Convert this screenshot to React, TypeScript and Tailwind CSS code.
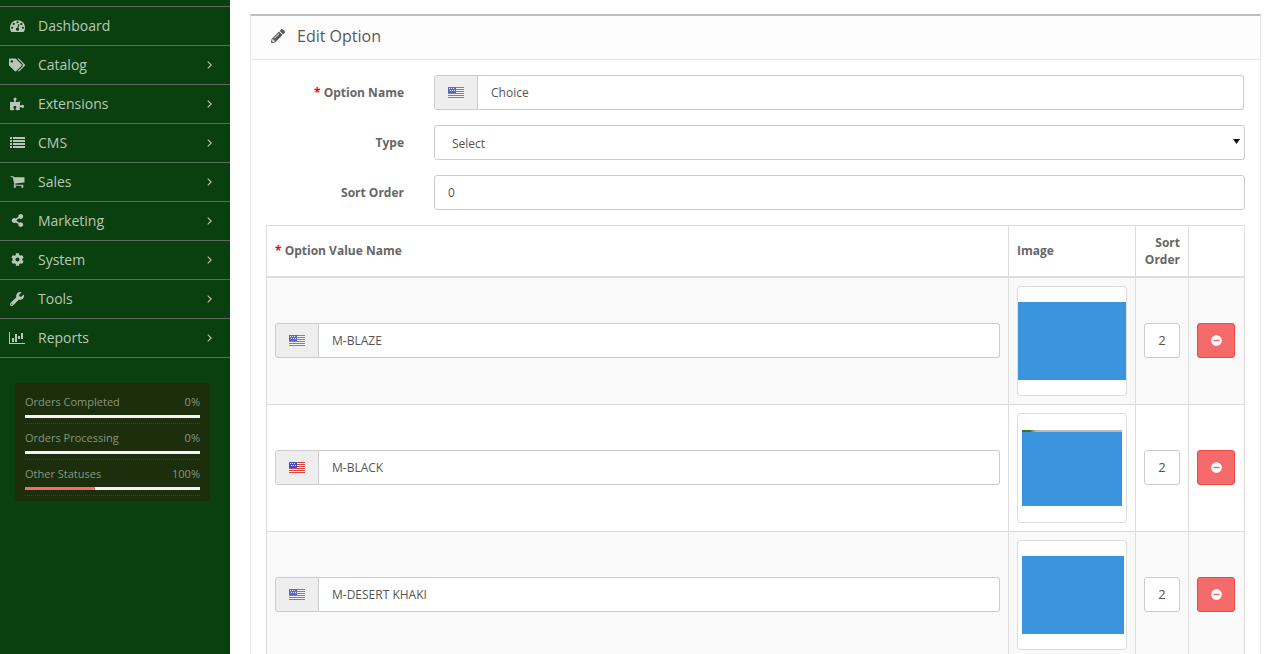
import React from "react";
import { FaTags, FaShareAlt, FaCog, FaWrench, FaPencilAlt, FaMinusCircle, FaPuzzlePiece } from "react-icons/fa";

type IconProps = { size?: number };

const Dash = ({ size = 15 }: IconProps) => (
  <svg width={size} height={size} viewBox="0 0 1792 1792" fill="currentColor">
    <path d="M384 1152q0-53-37.5-90.5t-90.5-37.5-90.5 37.5-37.5 90.5 37.5 90.5 90.5 37.5 90.5-37.5 37.5-90.5zm192-448q0-53-37.5-90.5t-90.5-37.5-90.5 37.5-37.5 90.5 37.5 90.5 90.5 37.5 90.5-37.5 37.5-90.5zm428 481l101-382q6-26-7.5-48.5t-38.5-29.5-48 6.5-30 39.5l-101 382q-60 5-107 43.5t-63 98.5q-20 77 20 146t117 89 146-20 89-117q16-60-6-117t-72-91zm660-33q0-53-37.5-90.5t-90.5-37.5-90.5 37.5-37.5 90.5 37.5 90.5 90.5 37.5 90.5-37.5 37.5-90.5zm-640-640q0-53-37.5-90.5t-90.5-37.5-90.5 37.5-37.5 90.5 37.5 90.5 90.5 37.5 90.5-37.5 37.5-90.5zm448 192q0-53-37.5-90.5t-90.5-37.5-90.5 37.5-37.5 90.5 37.5 90.5 90.5 37.5 90.5-37.5 37.5-90.5zm320 448q0 261-141 483-19 29-54 29h-1402q-35 0-54-29-141-221-141-483 0-182 71-348t191-286 286-191 348-71 348 71 286 191 191 286 71 348z" />
  </svg>
);
const Puzzle = () => <FaPuzzlePiece size={14} />;
const ListIcon = () => (
  <svg width="15" height="11" viewBox="0 0 15 11" fill="currentColor" shapeRendering="crispEdges">
    {[0, 3, 6, 9].map((y) => (
      <g key={y}>
        <rect x="0" y={y} width="2" height="2" />
        <rect x="3" y={y} width="12" height="2" />
      </g>
    ))}
  </svg>
);
const Cart = () => (
  <svg width="15" height="15" viewBox="0 0 1792 1792" fill="currentColor">
    <path d="M704 1536q0 52-38 90t-90 38-90-38-38-90 38-90 90-38 90 38 38 90zm896 0q0 52-38 90t-90 38-90-38-38-90 38-90 90-38 90 38 38 90zm128-1088v512q0 24-16.5 42.5t-40.5 21.5l-1044 122q13 60 13 70 0 16-24 64h920q26 0 45 19t19 45-19 45-45 19h-1024q-26 0-45-19t-19-45q0-11 8-31.5t16-36 21.5-40 15.5-29.5l-177-823h-204q-26 0-45-19t-19-45 19-45 45-19h256q16 0 28.5 6.5t19.5 15.5 13 24.5 8 26 5.5 29.5 4.5 26h1201q26 0 45 19t19 45z" />
  </svg>
);
const Bars = () => (
  <svg width="16" height="14" viewBox="0 0 2048 1792" fill="currentColor">
    <path d="M640 896v512h-256v-512h256zm384-512v1024h-256v-1024h256zm1024 1152v128h-2048v-1536h128v1408h1920zm-640-896v384h-256v-384h256zm384-384v768h-256v-768h256z" />
  </svg>
);
const Share = () => <FaShareAlt size={13} />;
const Cog = () => <FaCog size={13} />;
const Wrench = () => <FaWrench size={14} />;
const Tags = () => <FaTags size={16} />;

const nav = [
  { label: "Dashboard", icon: Dash, arrow: false },
  { label: "Catalog", icon: Tags, arrow: true },
  { label: "Extensions", icon: Puzzle, arrow: true },
  { label: "CMS", icon: ListIcon, arrow: true },
  { label: "Sales", icon: Cart, arrow: true },
  { label: "Marketing", icon: Share, arrow: true },
  { label: "System", icon: Cog, arrow: true },
  { label: "Tools", icon: Wrench, arrow: true },
  { label: "Reports", icon: Bars, arrow: true },
];

const stats = [
  { label: "Orders Completed", value: "0%", width: 0 },
  { label: "Orders Processing", value: "0%", width: 0 },
  { label: "Other Statuses", value: "100%", width: 40 },
];

function Flag({ soft }: { soft?: boolean }) {
  return (
    <svg width="16" height="11" viewBox="0 0 16 11" shapeRendering="crispEdges" className={soft ? "opacity-85" : ""}>
      <rect width="16" height="11" fill="#f5f5f5" />
      {[0, 2, 4, 6, 8, 10].map((y) => (
        <rect key={y} y={y} width="16" height="1" fill="#d8473f" />
      ))}
      <rect width="8" height="6" fill="#3f51c5" />
      {[1, 3, 5].map((x) => (
        <rect key={x} x={x} y="1" width="1" height="1" fill="#e8ecf8" />
      ))}
      {[2, 4, 6].map((x) => (
        <rect key={x} x={x} y="3" width="1" height="1" fill="#e8ecf8" />
      ))}
    </svg>
  );
}

function LangInput({ value, soft }: { value: string; soft?: boolean }) {
  return (
    <div className="flex h-[35px] w-full">
      <span className="flex w-[44px] shrink-0 items-center justify-center rounded-l-[3px] border border-[#cccccc] bg-[#eeeeee]">
        <Flag soft={soft} />
      </span>
      <input
        readOnly
        value={value}
        className="h-full min-w-0 flex-1 rounded-r-[3px] border border-l-0 border-[#cccccc] bg-white pl-[13px] text-[12px] text-[#555555] outline-none"
      />
    </div>
  );
}

function FormRow({ label, required, children }: { label: string; required?: boolean; children: React.ReactNode }) {
  return (
    <div className="flex items-center">
      <label className="w-[138px] shrink-0 text-right text-[12px] font-bold text-[#666666]">
        {required && <span className="text-[#ff0000]">* </span>}
        {label}
      </label>
      <div className="ml-[30px] flex-1">{children}</div>
    </div>
  );
}

const rows = [
  { name: "M-BLAZE", soft: true, pad: "p-0", blue: "h-[78px] w-[108px]", line: false },
  { name: "M-BLACK", soft: false, pad: "px-[4px]", blue: "h-[76px] w-[100px]", line: true },
  { name: "M-DESERT KHAKI", soft: true, pad: "px-[4px]", blue: "h-[78px] w-[102px]", line: false },
];

export default function App() {
  return (
    <div className="flex h-[654px] w-[1270px] overflow-hidden bg-white font-['Open_Sans',sans-serif]">
      <aside className="w-[230px] shrink-0 bg-[#0a400f] pt-[6px]">
        <ul className="border-t border-[#5e6b5c]">
          {nav.map((item) => {
            const Icon = item.icon;
            return (
              <li key={item.label} className="flex h-[39px] items-center border-b border-[#5e6b5c] pb-[1px] pl-[9px] pr-[18px] text-[14px] text-[#bac7b7]">
                <span className="mr-[13px] flex w-[16px] shrink-0 justify-center">
                  <Icon />
                </span>
                <span className="flex-1">{item.label}</span>
                {item.arrow && (
                  <svg width="5" height="8" viewBox="0 0 5 8" fill="none" stroke="currentColor" strokeWidth="1.1">
                    <path d="M0.7 0.6L4.2 4L0.7 7.4" />
                  </svg>
                )}
              </li>
            );
          })}
        </ul>
        <div className="mx-[15px] mt-[25px] w-[195px] rounded-[2px] bg-[#1c2e0c] px-[10px] pb-[5px] pt-[5px]">
          {stats.map((s) => (
            <div key={s.label} className="h-[36px] border-b border-dotted border-[#35462a] pt-[5px]">
              <div className="flex justify-between text-[11px] leading-[18px] text-[#87967f]">
                <span>{s.label}</span>
                <span>{s.value}</span>
              </div>
              <div className="mt-[4px] h-[3px] bg-[#f2f2f2]">
                <div className="h-full bg-[#f56b6b]" style={{ width: `${s.width}%` }} />
              </div>
            </div>
          ))}
        </div>
      </aside>

      <main className="flex-1 pl-[20px] pr-[9px] pt-[14px]">
        <section className="border-x border-t-2 border-x-[#e8e8e8] border-t-[#bfbfbf]">
          <header className="flex h-[44px] items-center border-b border-[#e8e8e8] bg-[#fcfcfc] pb-[4px] pl-[20px] text-[16px] text-[#595959]">
            <FaPencilAlt size={14} className="mr-[12px]" />
            <span>Edit Option</span>
          </header>
          <div className="px-[15px] pt-[15px]">
            <div className="flex flex-col gap-[15px]">
              <FormRow label="Option Name" required>
                <div className="w-[810px]">
                  <LangInput value="Choice" soft />
                </div>
              </FormRow>
              <FormRow label="Type">
                <div className="relative">
                  <select className="h-[35px] w-full appearance-none rounded-[3px] border border-[#cccccc] bg-white pl-[17px] pt-[3px] text-[12px] text-[#555555] outline-none">
                    <option>Select</option>
                  </select>
                  <svg width="7" height="5" viewBox="0 0 7 5" className="pointer-events-none absolute right-[5px] top-[14px]">
                    <path d="M0 0H7L3.5 5Z" fill="#111111" />
                  </svg>
                </div>
              </FormRow>
              <FormRow label="Sort Order">
                <input
                  readOnly
                  value="0"
                  className="h-[35px] w-full rounded-[3px] border border-[#cccccc] bg-white pl-[13px] text-[12px] text-[#555555] outline-none"
                />
              </FormRow>
            </div>

            <table className="mt-[15px] w-[978px] table-fixed border-collapse text-[12px] text-[#666666]">
              <colgroup>
                <col className="w-[742px]" />
                <col className="w-[127px]" />
                <col className="w-[53px]" />
                <col className="w-[56px]" />
              </colgroup>
              <thead>
                <tr className="h-[51px]">
                  <th className="border border-b-2 border-[#dddddd] px-[8px] text-left font-bold">
                    <span className="text-[#ff0000]">* </span>Option Value Name
                  </th>
                  <th className="border border-b-2 border-[#dddddd] px-[8px] text-left font-bold">Image</th>
                  <th className="border border-b-2 border-[#dddddd] px-[8px] text-right font-bold leading-[17px]">Sort Order</th>
                  <th className="border border-b-2 border-[#dddddd]" />
                </tr>
              </thead>
              <tbody>
                {rows.map((r, i) => (
                  <tr key={r.name} className={i % 2 === 0 ? "bg-[#f9f9f9]" : "bg-white"}>
                    <td className="border border-[#dddddd] px-[8px]">
                      <LangInput value={r.name} soft={r.soft} />
                    </td>
                    <td className="border border-[#dddddd] p-[8px]">
                      <div className={`flex h-[110px] w-[110px] items-center rounded-[3px] border border-[#dddddd] bg-white ${r.pad}`}>
                        <div className={`${r.blue} shrink-0 bg-[#3a94dd]`}>
                          {r.line && (
                            <div className="h-[2px] bg-[linear-gradient(90deg,#2f7a1f_0,#2f7a1f_8%,#b9bdb9_14%)]" />
                          )}
                        </div>
                      </div>
                    </td>
                    <td className="border border-[#dddddd] px-[8px]">
                      <input
                        readOnly
                        value="2"
                        className="h-[35px] w-[36px] rounded-[3px] border border-[#cccccc] bg-white pb-[2px] text-center text-[13px] text-[#555555] outline-none"
                      />
                    </td>
                    <td className="border border-[#dddddd] px-[8px]">
                      <button className="flex h-[35px] w-[38px] items-center justify-center rounded-[3px] border border-[#f24545] bg-[#f56b6b] text-white">
                        <FaMinusCircle size={11} />
                      </button>
                    </td>
                  </tr>
                ))}
              </tbody>
            </table>
          </div>
        </section>
      </main>
    </div>
  );
}
